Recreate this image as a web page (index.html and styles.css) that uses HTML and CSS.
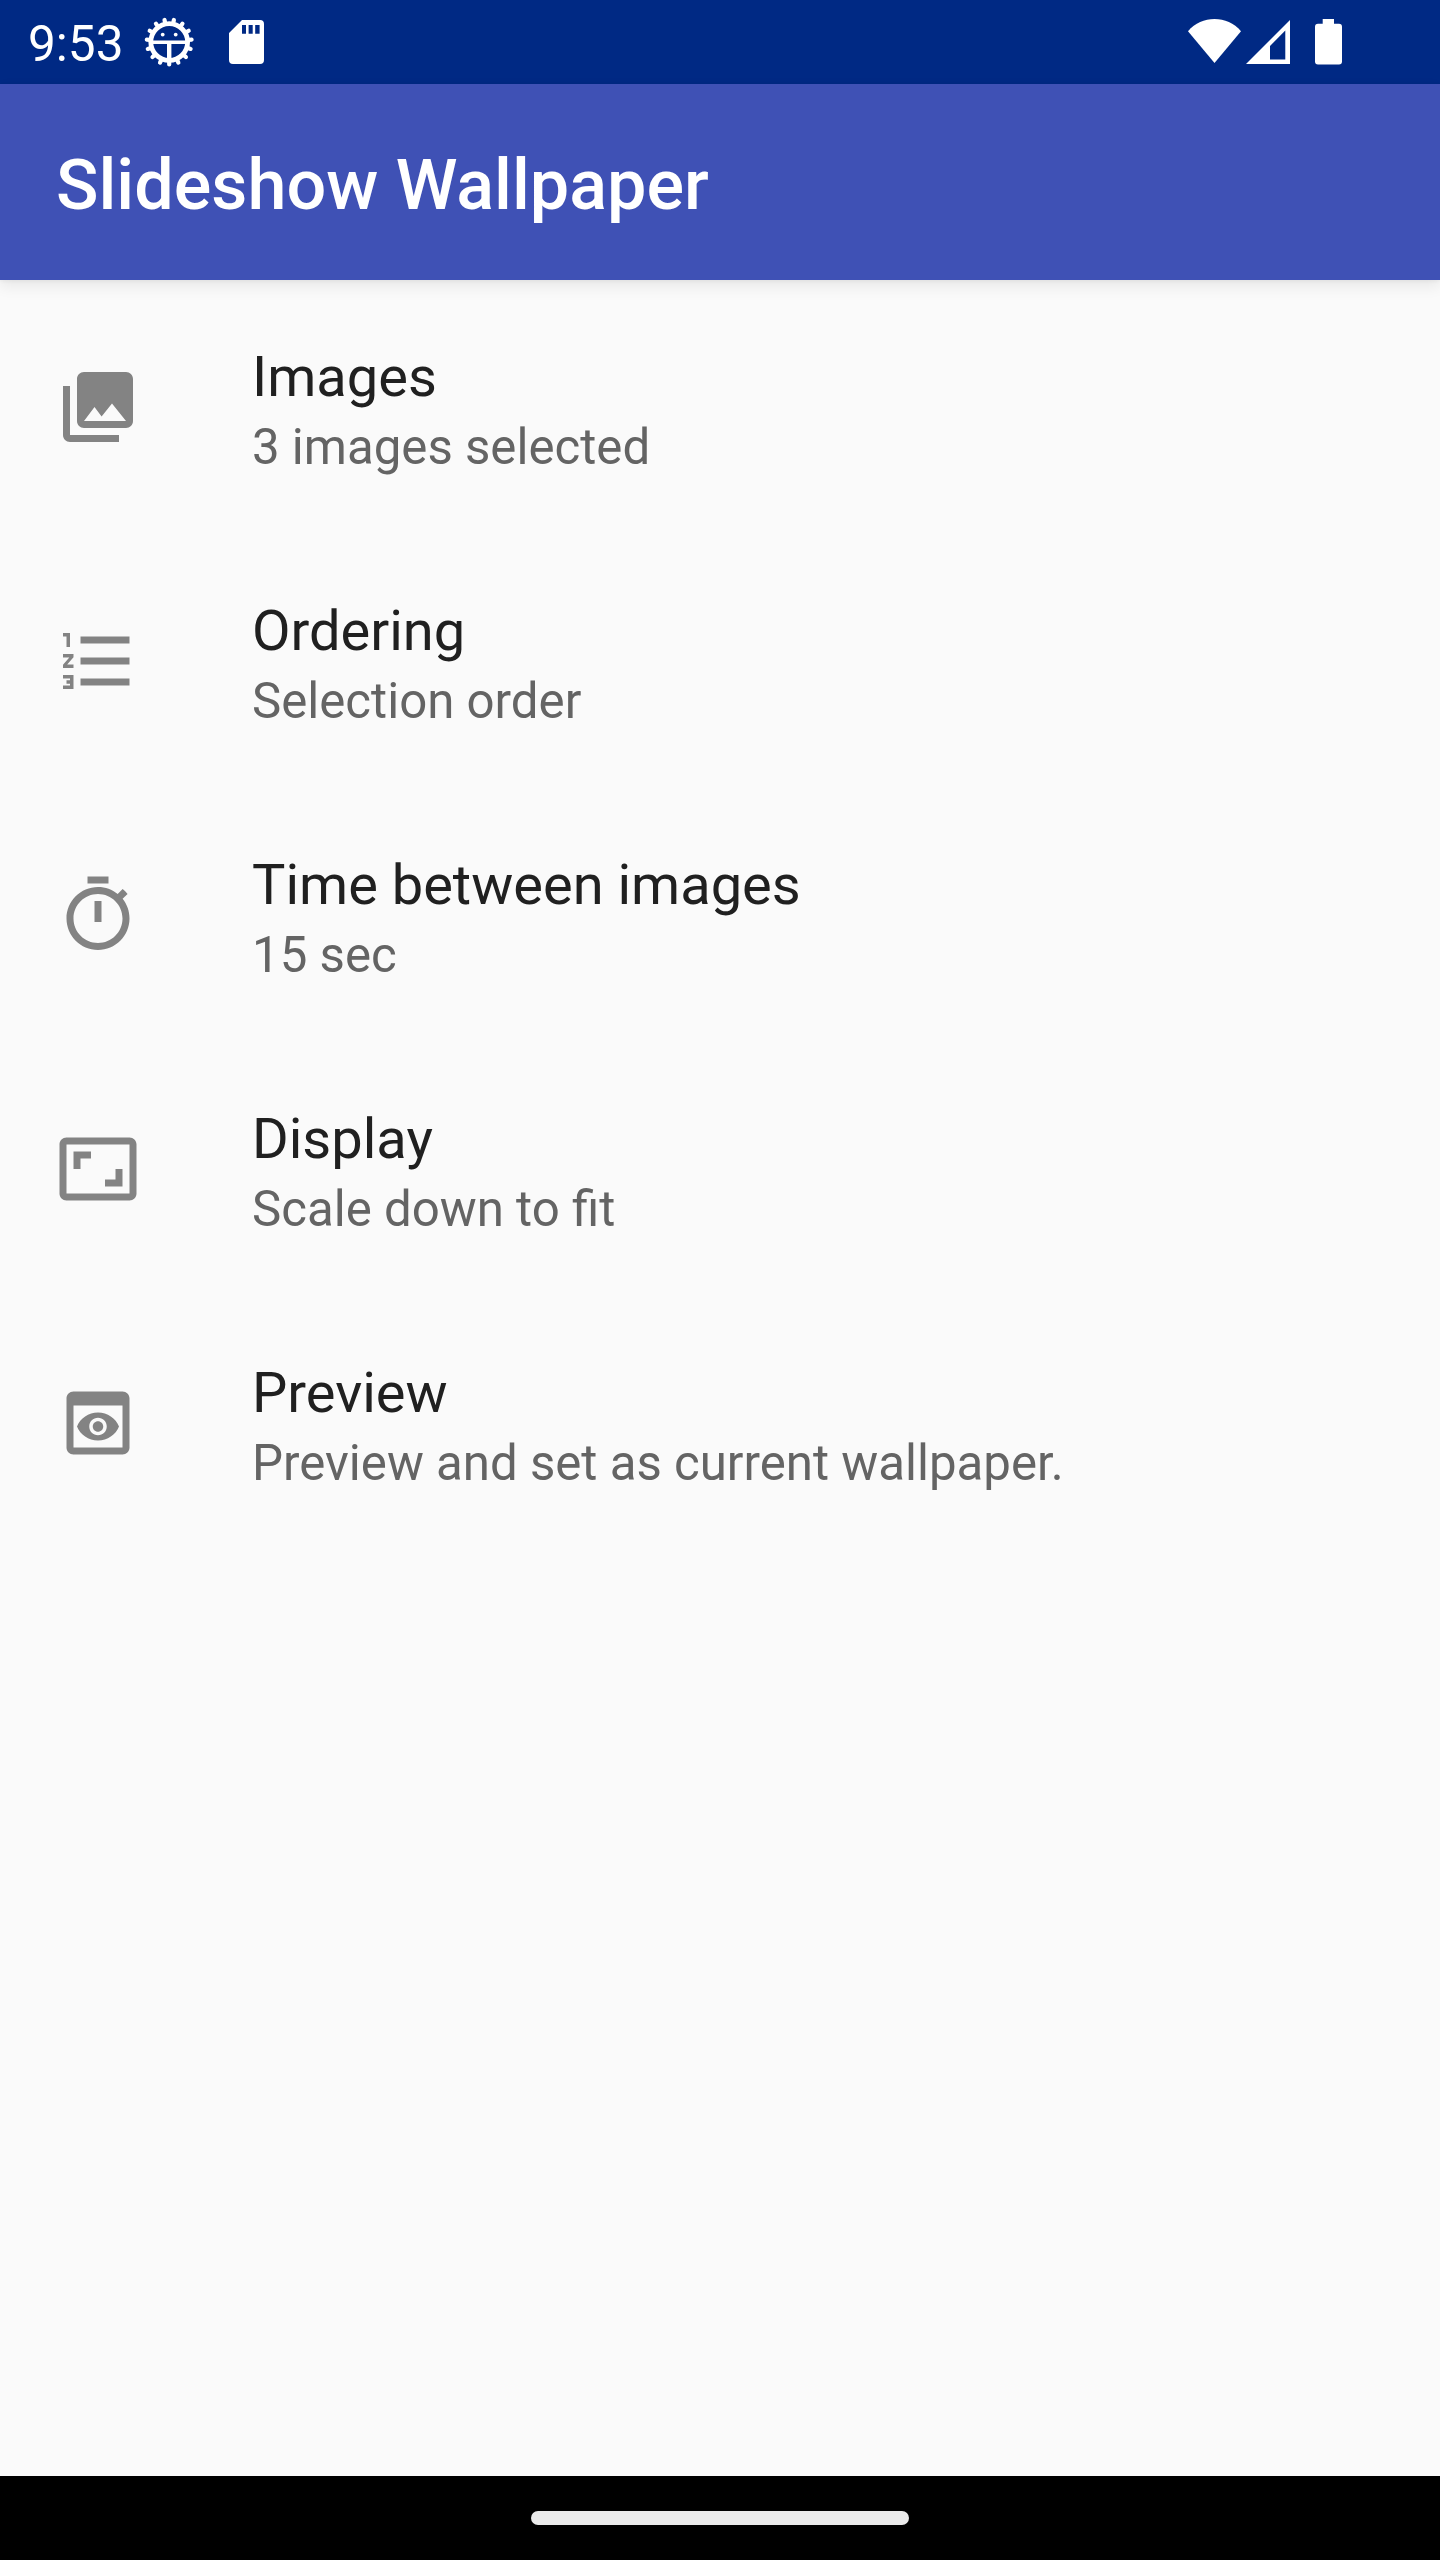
FILE: index.html
```html
<!DOCTYPE html>
<html lang="en">
<head>
<meta charset="utf-8">
<title>Slideshow Wallpaper</title>
<link rel="stylesheet" href="styles.css">
</head>
<body>
<div class="status-bar">
  <span class="clock">9:53</span>
  <svg class="icon-debug" viewBox="-25.200 -25 50 50">
    <circle r="18.400" fill="none" stroke="#fff" stroke-width="4.800"/>
    <path fill="none" stroke="#fff" stroke-width="4.200" stroke-linecap="round" d="M0 19V22.5M7.73 17.36 9.15 20.55M14.12 12.71 16.72 15.05M18.07 5.87 21.4 6.95M18.9-1.99 22.38-2.35M16.45-9.5 19.5-11.25M11.17-15.37 13.23-18.2M3.95-18.58 4.68-22M-7.73 17.36-9.15 20.55M-14.12 12.71-16.72 15.05M-18.07 5.87-21.4 6.95M-18.9-1.99-22.38-2.35M-16.45-9.5-19.5-11.25M-11.17-15.37-13.23-18.2M-3.95-18.58-4.68-22"/>
    <path fill="#fff" d="M-17-1.400H17V1.900H2.200V17H-2.200V1.900H-17z"/>
    <circle cx="-6.5" cy="-7.4" r="1.9" fill="#fff"/>
    <circle cx="6.5" cy="-7.4" r="1.9" fill="#fff"/>
  </svg>
  <svg class="icon-sd" viewBox="0 0 35 44">
    <path fill="#fff" fill-rule="evenodd" d="M13 0H31a4 4 0 0 1 4 4V40a4 4 0 0 1-4 4H4a4 4 0 0 1-4-4V13zM13 5V13.7H17V5zM19.6 5V13.7H23.7V5zM26.2 5V13.7H30.6V5z"/>
  </svg>
  <div class="system-icons">
    <svg class="icon-wifi" viewBox="0 0 53 44"><path fill="#fff" d="M26.5 44 0 12.2C7 4 16.500 0 26.500 0S46 4 53 12.200z"/></svg>
    <svg class="icon-signal" viewBox="0 0 44 44"><path fill="#fff" fill-rule="evenodd" d="M44 0V44H0zM39.300 10.500 24 26V39.500H39.300z"/></svg>
    <svg class="icon-battery" viewBox="0 0 27 45.500"><path fill="#fff" d="M7.700 0H19V4.800H24a3 3 0 0 1 3 3V42.500a3 3 0 0 1-3 3H3a3 3 0 0 1-3-3V7.800a3 3 0 0 1 3-3H7.700z"/></svg>
  </div>
</div>
<header class="app-bar"><h1 class="app-title">Slideshow Wallpaper</h1></header>
<main class="settings">
  <div class="row">
    <svg class="row-icon" viewBox="0 0 24 24"><path d="M22 16V4c0-1.100-.9-2-2-2H8c-1.100 0-2 .9-2 2v12c0 1.100.9 2 2 2h12c1.100 0 2-.9 2-2zm-11-4l2.030 2.710L16 11l4 5H8l3-4zM2 6v14c0 1.100.9 2 2 2h14v-2H4V6H2z"/></svg>
    <div class="row-text"><div class="row-title">Images</div><div class="row-summary">3 images selected</div></div>
  </div>
  <div class="row">
    <svg class="row-icon" viewBox="0 0 24 24"><path d="M2 17h2v.5H3v1h1v.5H2v1h3v-4H2v1zm1-9h1V4H2v1h1v3zm-1 3h1.800L2 13.100v.9h3v-1H3.200L5 10.900V10H2v1zm5-6v2h14V5H7zm0 14h14v-2H7v2zm0-6h14v-2H7v2z"/></svg>
    <div class="row-text"><div class="row-title">Ordering</div><div class="row-summary">Selection order</div></div>
  </div>
  <div class="row">
    <svg class="row-icon" viewBox="0 0 24 24"><path d="M15 1H9v2h6V1zm-4 13h2V8h-2v6zm8.030-6.610l1.420-1.420c-.43-.51-.9-.99-1.410-1.410l-1.420 1.420C16.070 4.740 14.120 4 12 4c-4.970 0-9 4.030-9 9s4.020 9 9 9 9-4.030 9-9c0-2.120-.74-4.070-1.970-5.610zM12 20c-3.870 0-7-3.130-7-7s3.130-7 7-7 7 3.130 7 7-3.130 7-7 7z"/></svg>
    <div class="row-text"><div class="row-title">Time between images</div><div class="row-summary">15 sec</div></div>
  </div>
  <div class="row">
    <svg class="row-icon" viewBox="0 0 24 24"><path d="M19 12h-2v3h-3v2h5v-5zM7 9h3V7H5v5h2V9zm14-6H3c-1.100 0-2 .9-2 2v14c0 1.100.9 2 2 2h18c1.100 0 2-.9 2-2V5c0-1.100-.9-2-2-2zm0 16.010H3V4.990h18v14.020z"/></svg>
    <div class="row-text"><div class="row-title">Display</div><div class="row-summary">Scale down to fit</div></div>
  </div>
  <div class="row">
    <svg class="row-icon" viewBox="0 0 24 24"><path d="M19 3H5c-1.110 0-2 .9-2 2v14c0 1.100.89 2 2 2h14c1.100 0 2-.9 2-2V5c0-1.100-.89-2-2-2zm0 16H5V7h14v12zm-5.500-6c0 .83-.67 1.500-1.500 1.500s-1.500-.67-1.500-1.500.67-1.500 1.500-1.500 1.500.67 1.500 1.500zM12 9c-2.730 0-5.060 1.660-6 4 .94 2.340 3.270 4 6 4s5.060-1.660 6-4c-.94-2.340-3.270-4-6-4zm0 6.500c-1.380 0-2.500-1.120-2.500-2.500s1.120-2.500 2.500-2.500 2.500 1.120 2.500 2.500-1.120 2.500-2.500 2.500z"/></svg>
    <div class="row-text"><div class="row-title">Preview</div><div class="row-summary">Preview and set as current wallpaper.</div></div>
  </div>
</main>
<nav class="nav-bar"><div class="nav-handle"></div></nav>
</body>
</html>
```

FILE: styles.css
```css
* { box-sizing: border-box; }
body {
  margin: 0;
  width: 1440px;
  height: 2560px;
  display: flex;
  flex-direction: column;
  background: #fafafa;
  font-family: Roboto, sans-serif;
}
svg { display: block; flex: none; }
.status-bar {
  height: 84px;
  display: flex;
  align-items: flex-start;
  padding: 0 98px 0 28px;
  background: #002984;
  color: #fff;
}
.clock {
  width: 116px;
  padding-top: 16px;
  font-size: 49.5px;
  line-height: 57px;
}
.icon-debug { width: 50px; height: 50px; margin-top: 17px; }
.icon-sd { width: 35px; height: 44px; margin: 20px 0 0 35px; }
.system-icons { display: flex; align-items: flex-start; margin-left: auto; padding-top: 19px; }
.icon-wifi { width: 53px; height: 44px; }
.icon-signal { width: 44px; height: 44px; margin: 1px 25px 0 5px; }
.icon-battery { width: 27px; height: 45.5px; }
.app-bar {
  height: 196px;
  display: flex;
  align-items: center;
  padding: 6px 0 0 56px;
  background: #3f51b5;
  color: #fff;
  box-shadow: 0 6px 14px rgba(0, 0, 0, .08), 0 1px 4px rgba(0, 0, 0, .05);
}
.app-title { margin: 0; font-size: 70.15px; line-height: 82px; font-weight: 500; }
.settings { flex: 1; }
.row { height: 254px; display: flex; align-items: center; padding-left: 56px; }
.row-icon { width: 84px; height: 84px; margin-right: 112px; fill: #838383; }
.row-text { padding-top: 10px; }
.row-title { font-size: 56px; line-height: 70px; color: #202020; }
.row-summary { font-size: 49.2px; line-height: 70px; color: #646464; }
.nav-bar { height: 84px; display: flex; align-items: center; justify-content: center; background: #000; }
.nav-handle { width: 378px; height: 14px; border-radius: 7px; background: #ebebeb; }
```
